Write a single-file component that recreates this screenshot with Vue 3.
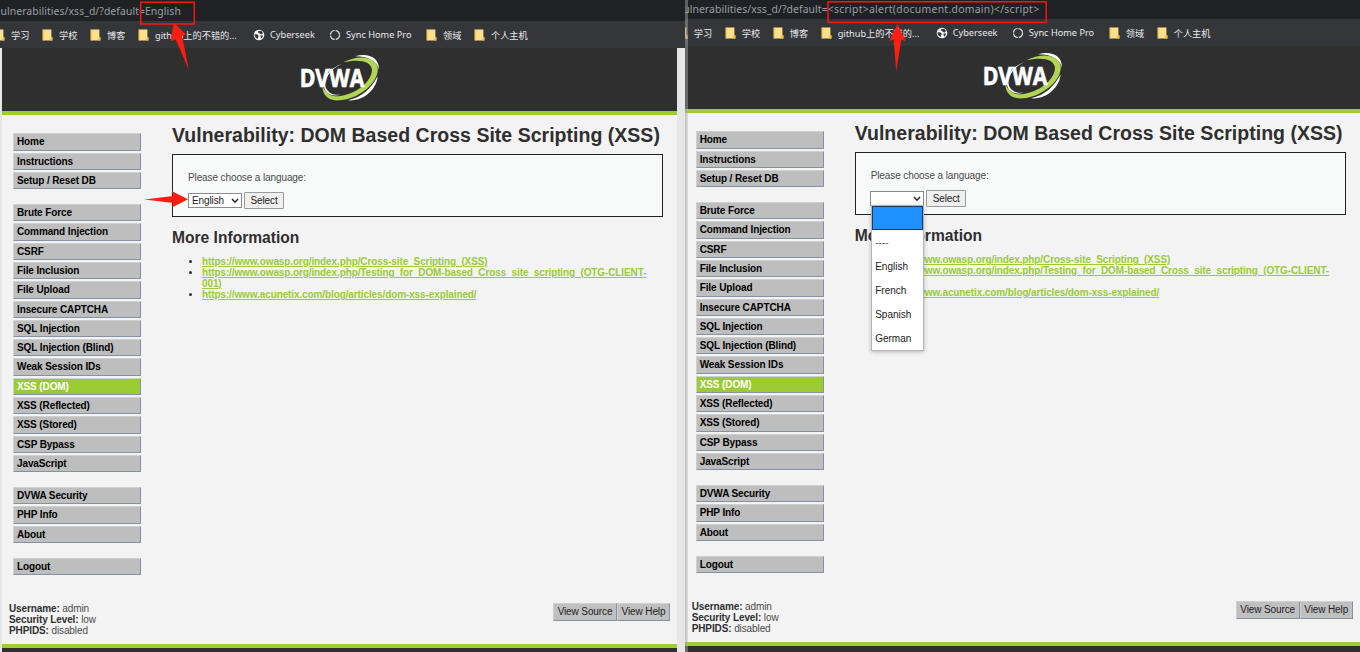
<template>
  <div class="desktop">
    <section
      v-for="pane in panes"
      :key="pane.id"
      class="pane"
      :class="pane.id"
    >
      <div class="window">
        <div class="address">
          <span class="path">ulnerabilities/xss_d/?default=</span>
          <span class="payload">{{ pane.payload }}</span>
        </div>

        <div class="bookmarks">
          <div v-for="mark in bookmarks" :key="mark.label" class="bookmark">
            <span class="mark-icon" v-html="icons[mark.icon]" />
            <span class="mark-label" :class="mark.size">{{ mark.label }}</span>
          </div>
        </div>

        <div class="viewport">
          <div class="page">
            <header class="header">
              <svg class="logo" width="80" height="50" viewBox="30 10 240 150">
                <path fill="#fff" d="M195 20C232 8 268 22 267 60C262 38 240 20 195 20Z" />
                <path fill="#fff" d="M263 80C260 118 222 156 174 152C216 143 244 116 263 80Z" />
                <path fill="#b1d455" d="M160 38C205 14 256 20 263 54C268 95 212 146 150 152C120 155 97 140 97 108C106 130 122 141 146 140C200 134 244 96 246 62C246 34 205 27 160 38Z" />
                <path fill="#fff" d="M156 42C118 60 98 92 109 117C118 133 134 137 152 135C128 142 108 133 103 116C96 86 118 56 156 42Z" />
                <text x="29" y="111" textLength="194" lengthAdjust="spacingAndGlyphs">DVWA</text>
              </svg>
            </header>

            <div class="columns">
              <nav class="menu">
                <ul v-for="(group, g) in menu" :key="g">
                  <li v-for="item in group" :key="item" :class="{ selected: item === 'XSS (DOM)' }">
                    {{ item }}
                  </li>
                </ul>
              </nav>

              <main class="content">
                <h1>Vulnerability: DOM Based Cross Site Scripting (XSS)</h1>
                <div class="form-box">
                  <p>Please choose a language:</p>
                  <div class="form-row">
                    <div class="select">
                      <span>{{ pane.value }}</span>
                      <svg class="chevron" width="8" height="6" viewBox="0 0 8 6">
                        <polyline points="1 1 4 4.3 7 1" fill="none" stroke="#222" stroke-width="1.4" />
                      </svg>
                      <div v-if="pane.open" class="dropdown">
                        <div
                          v-for="(option, i) in options"
                          :key="i"
                          class="option"
                          :class="{ active: i === 0, muted: option === '----' }"
                        >{{ option }}</div>
                      </div>
                    </div>
                    <button class="submit">Select</button>
                  </div>
                </div>

                <h2>More Information</h2>
                <ul class="links">
                  <li v-for="link in links" :key="link"><a>{{ link }}</a></li>
                </ul>
              </main>
            </div>

            <div class="system">
              <div class="info">
                <div><b>Username:</b> admin</div>
                <div><b>Security Level:</b> low</div>
                <div><b>PHPIDS:</b> disabled</div>
              </div>
              <div class="source-buttons">
                <button>View Source</button>
                <button>View Help</button>
              </div>
            </div>

            <footer class="footer" />
          </div>
          <div class="scrollbar" />
        </div>
      </div>
    </section>

    <svg class="marks" width="1360" height="652" viewBox="0 0 1360 652">
      <rect x="140.7" y="2.2" width="53.6" height="21.8" />
      <rect x="828" y="1.8" width="218.2" height="20.6" />
      <polygon points="173.7,22.7 186.3,34.8 182,36 188.8,69.8 175.7,39.3 170.7,41.2" />
      <polygon points="897.7,24 905.5,41 901.3,39.4 896.2,71.2 893.7,39.4 889.2,41" />
      <polygon points="188,199.3 172,191.2 173.2,196 144.3,199.4 173.2,203 172,207.4" />
    </svg>
  </div>
</template>

<script setup>
const panes = [
  { id: 'left', payload: 'English', value: 'English', open: false },
  { id: 'right', payload: '<script>alert(document.domain)<\/script>', value: '', open: true }
];

const bookmarks = [
  { icon: 'folder', label: '学习', size: 'w2' },
  { icon: 'folder', label: '学校', size: 'w2' },
  { icon: 'folder', label: '博客', size: 'w2' },
  { icon: 'folder', label: 'github上的不错的...', size: 'github' },
  { icon: 'globe', label: 'Cyberseek', size: 'cyber' },
  { icon: 'ring', label: 'Sync Home Pro', size: 'sync' },
  { icon: 'folder', label: '领域', size: 'w2' },
  { icon: 'folder', label: '个人主机', size: 'w4' }
];

const menu = [
  ['Home', 'Instructions', 'Setup / Reset DB'],
  [
    'Brute Force',
    'Command Injection',
    'CSRF',
    'File Inclusion',
    'File Upload',
    'Insecure CAPTCHA',
    'SQL Injection',
    'SQL Injection (Blind)',
    'Weak Session IDs',
    'XSS (DOM)',
    'XSS (Reflected)',
    'XSS (Stored)',
    'CSP Bypass',
    'JavaScript'
  ],
  ['DVWA Security', 'PHP Info', 'About'],
  ['Logout']
];

const options = ['', '----', 'English', 'French', 'Spanish', 'German'];

const links = [
  'https://www.owasp.org/index.php/Cross-site_Scripting_(XSS)',
  'https://www.owasp.org/index.php/Testing_for_DOM-based_Cross_site_scripting_(OTG-CLIENT-001)',
  'https://www.acunetix.com/blog/articles/dom-xss-explained/'
];

const icons = {
  folder: `
<svg width="12" height="12" viewBox="0 0 12 12">
  <path d="M.7 .6h8.700v7.600l1 .8v2.500H.7z" fill="#ffe08a" />
  <path d="M.7 .6h.9v10.900h-.9zM8.800 8h1.600v3.500H7.800z" fill="#e9bd45" />
</svg>
`,
  globe: `
<svg width="12" height="12" viewBox="0 0 12 12">
  <circle cx="6" cy="6" r="5.3" fill="#f3f3f3" />
  <path d="M1.6 5.2l3 .2 1.200 1.500-.8 1.200v1.600C2.800 9.300 1.400 7.500 1.600 5.200zM5.300 1.900l3.200.1 1.500 1.900-1.600 1.500-1.800-.9-1.500-1zM7.400 6.600l2.600-.1c-.1 1.400-.8 2.400-2 3z" fill="#35363a" />
</svg>
`,
  ring: `
<svg width="12" height="12" viewBox="0 0 12 12">
  <circle cx="6" cy="6" r="4.500" fill="none" stroke="#e4e4e4" stroke-width="1.200" stroke-dasharray="6 1.070" />
</svg>
`
};
</script>

<style>
body {
  background: #f3f3f3;
  overflow: hidden;
}
</style>

<style scoped>
.desktop {
  position: relative;
  display: flex;
  width: 1360px;
  height: 652px;
  overflow: hidden;
  font-family: "Liberation Sans", Arial, sans-serif;
  font-size: 10px;
  letter-spacing: -0.11px;
  color: #4a4a4a;
}

.pane {
  position: relative;
  flex: none;
  width: 685px;
  height: 652px;
  overflow: hidden;
}
.pane.right {
  width: 675px;
}
.pane.right::before {
  content: "";
  position: absolute;
  z-index: 2;
  left: 0;
  top: 0;
  width: 3px;
  height: 100%;
  background: linear-gradient(to right, rgba(150, 150, 150, 0.55), rgba(190, 190, 190, 0.4));
}

.window {
  display: flex;
  flex-direction: column;
  width: 685px;
  height: 656px;
}
.right .window {
  margin: -2px 0 0 -2.3px;
}

.address {
  display: flex;
  align-items: center;
  height: 21px;
  background: #202124;
  color: #9aa0a6;
  font-family: "Noto Sans", sans-serif;
  font-size: 10.4px;
  letter-spacing: 0.08px;
  white-space: nowrap;
}
.path {
  display: flex;
  flex: none;
  justify-content: flex-end;
  width: 145px;
  overflow: hidden;
}
.right .payload {
  letter-spacing: 0.29px;
}

.bookmarks {
  display: flex;
  align-items: center;
  gap: 14px;
  height: 27px;
  background: #35363a;
  color: #e8eaed;
  font-family: "Noto Sans", "Noto Sans CJK SC", sans-serif;
  font-size: 9.2px;
  letter-spacing: 0;
  white-space: nowrap;
}
.bookmark {
  display: flex;
  flex: none;
  align-items: center;
  gap: 5px;
}
.bookmark:first-child {
  margin-left: -6px;
}
.mark-icon {
  display: flex;
  width: 12px;
  height: 12px;
}
.w2 {
  width: 17px;
}
.w4 {
  width: 36px;
}
.github {
  width: 84px;
}
.cyber {
  width: 45px;
}
.sync {
  width: 66px;
}

.viewport {
  display: flex;
  flex: 1;
}
.page {
  display: flex;
  flex-direction: column;
  width: 675px;
  border-left: 2px solid #e6e6e6;
  background: #f3f3f3;
}
.right .page {
  width: 676px;
}
.scrollbar {
  flex: 1;
  background: #e6e6e6;
}

.header {
  display: flex;
  justify-content: center;
  height: 63px;
  border-bottom: 4px solid #a1cc33;
  background: #2f2f2f;
}
.logo {
  margin: 5px 0 0 1px;
}
.logo text {
  font-family: "Open Sans", sans-serif;
  font-size: 74px;
  font-weight: 700;
  letter-spacing: 0;
  fill: #fff;
  stroke: #fff;
  stroke-width: 2;
}

.columns {
  display: flex;
  height: 485px;
}

.menu {
  width: 128px;
  margin: 18.4px 0 0 11px;
}
.menu ul {
  margin: 0 0 14.8px;
  padding: 0;
  list-style: none;
}
.menu li {
  box-sizing: border-box;
  height: 17.3px;
  margin-bottom: 2px;
  padding-left: 3px;
  border: 1px solid #d0d0d0;
  border-right-color: #8791a6;
  border-bottom-color: #8791a6;
  background: #bebebe;
  color: #000;
  font-weight: 700;
  line-height: 16px;
}
.menu li.selected {
  background: #9acc32;
  color: #fff;
}

.content {
  width: 491px;
  margin-left: 31px;
}
h1 {
  margin: 8px 0 0;
  color: #2f2f2f;
  font-size: 19.5px;
  letter-spacing: 0.02px;
  line-height: 24px;
  white-space: nowrap;
}
.form-box {
  box-sizing: border-box;
  height: 63px;
  margin-top: 7px;
  padding: 16px 15px 0;
  border: 1px solid #222;
  background: #f8faf9;
}
.form-box p {
  margin: 0;
  line-height: 14px;
}
.form-row {
  display: flex;
  align-items: center;
  gap: 2px;
  margin-top: 7px;
  height: 17px;
}
.right .form-row {
  margin-left: -0.5px;
}
.select {
  position: relative;
  box-sizing: border-box;
  display: flex;
  align-items: center;
  justify-content: space-between;
  width: 54px;
  height: 15px;
  padding: 0 2px 0 3px;
  border: 1px solid #8a8a8a;
  background: #fff;
  color: #222;
}
.dropdown {
  position: absolute;
  z-index: 3;
  left: 0;
  top: 13px;
  box-sizing: border-box;
  width: 53px;
  height: 146px;
  border: 1px solid #b5b5b5;
  background: #fff;
  box-shadow: 0 1px 4px rgba(0, 0, 0, 0.25);
  letter-spacing: 0;
}
.option {
  box-sizing: border-box;
  height: 24px;
  padding-left: 3px;
  line-height: 25px;
}
.option.active {
  border: 1px solid #1b3a5c;
  background: #1e90ff;
}
.option.muted {
  color: #555;
}
button {
  box-sizing: border-box;
  margin: 0;
  padding: 0;
  font-family: inherit;
  font-size: inherit;
  letter-spacing: inherit;
  color: #222;
}
.submit {
  width: 40px;
  height: 17px;
  border: 1px solid #9b9b9b;
  border-radius: 1px;
  background: #efefef;
}

h2 {
  margin: 11px 0 0;
  color: #2f2f2f;
  font-size: 15.6px;
  letter-spacing: 0;
  line-height: 20px;
}
.links {
  margin: 8px 0 0;
  padding-left: 30px;
  line-height: 11px;
}
.links li {
  color: #2f2f2f;
}
.links a {
  color: #9acc32;
  font-weight: 700;
  text-decoration: underline;
}

.system {
  display: flex;
  justify-content: space-between;
  height: 41.5px;
  padding: 2.5px 7px 0;
}
.right .system {
  padding-right: 8px;
}
.info {
  padding-top: 0.5px;
  line-height: 11px;
}
.info b {
  color: #2f2f2f;
}
.source-buttons {
  display: flex;
}
.source-buttons button {
  width: 53px;
  height: 18px;
  border: 1px solid #d0d0d0;
  border-right-color: #8791a6;
  border-bottom-color: #8791a6;
  background: #c0c0c0;
}
.source-buttons button:first-child {
  width: 64px;
}

.footer {
  flex: 1;
  border-top: 4px solid #a1cc33;
  background: #2f2f2f;
}

.marks {
  position: absolute;
  z-index: 4;
  left: 0;
  top: 0;
  pointer-events: none;
}
.marks rect {
  fill: none;
  stroke: #f5190f;
  stroke-width: 1.5;
}
.marks polygon {
  fill: #ff1c10;
}
</style>
